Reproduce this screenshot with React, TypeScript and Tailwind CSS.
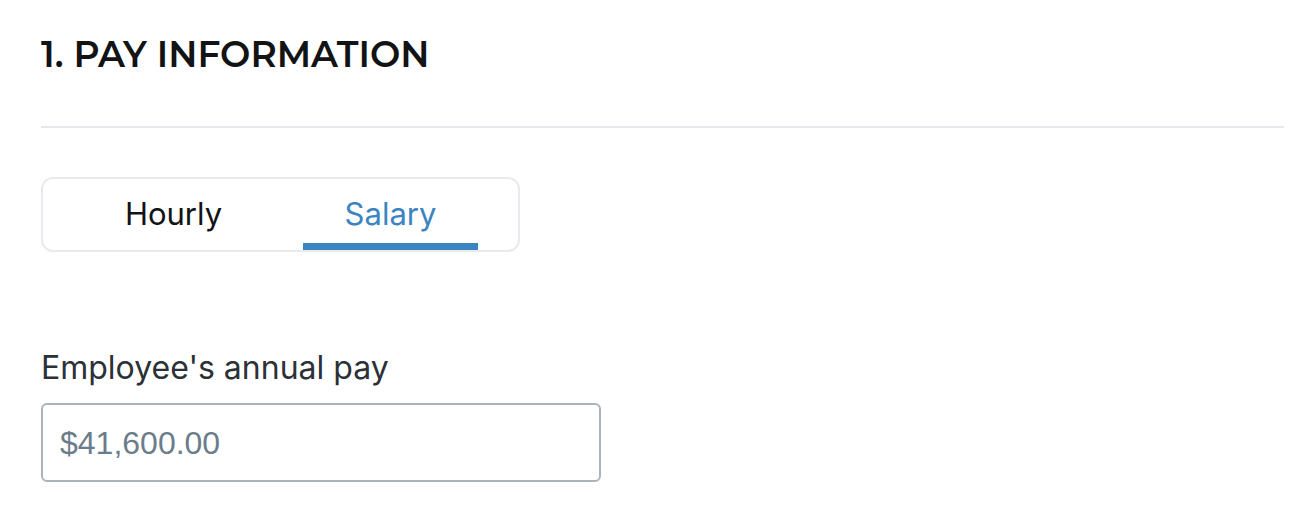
export default function App() {
  return (
    <div className="min-h-[514px] w-[1316px] bg-white pl-[41px] pr-[32px] pt-[34px]" style={{ fontFamily: "Inter, 'Noto Sans', sans-serif" }}>
      <h2 className="text-[36px] font-semibold leading-[40px] text-[#111315]" style={{ fontFamily: "Montserrat, Inter, sans-serif" }}>
        1. PAY INFORMATION
      </h2>

      <div className="mt-[52px] h-[2px] bg-[#e6e8eb]" />

      {/* Pay type tabs */}
      <div className="mt-[49px] flex h-[75px] w-[479px] gap-[42px] rounded-[12px] border-2 border-[#e8eaed] pl-[43px]">
        <button className="flex w-[175px] items-center justify-center text-[31px] text-[#111315]">
          Hourly
        </button>
        <button className="relative flex w-[175px] items-center justify-center text-[31px] text-[#3b84c2]">
          Salary
          <span className="absolute bottom-[0px] left-0 right-0 h-[7px] bg-[#3b84c2]" />
        </button>
      </div>

      <label className="mt-[96px] block text-[32px] leading-[40px] text-[#2b3136]">Employee's annual pay</label>
      <div className="mt-[15px] flex h-[79px] w-[560px] items-center rounded-[6px] border-2 border-[#a9b4bc] px-[17px]">
        <span className="text-[32px] text-[#6b7d8a]" style={{ fontFamily: "'Liberation Sans', Arial, sans-serif" }}>
          $41,600.00
        </span>
      </div>
    </div>
  );
}
